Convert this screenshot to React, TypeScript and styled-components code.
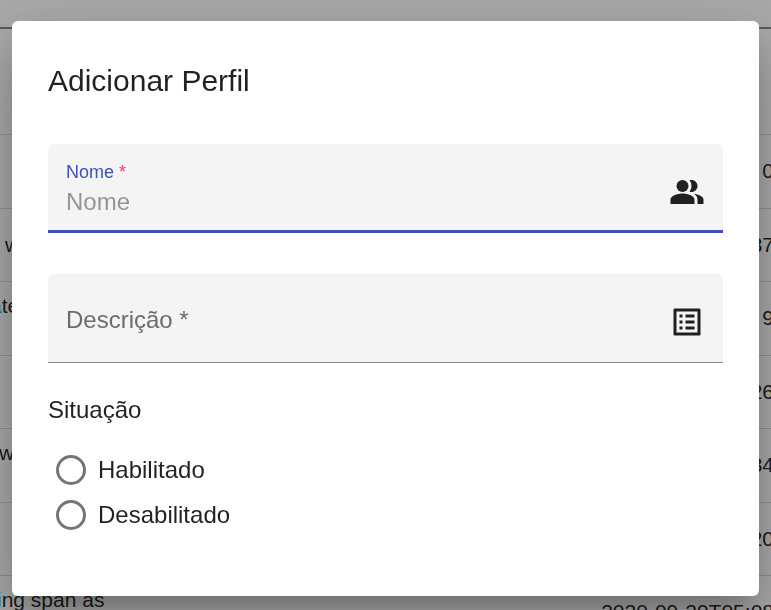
import React from 'react';
import styled, { createGlobalStyle } from 'styled-components';
import { MdListAlt, MdPeopleAlt } from 'react-icons/md';

const GlobalStyle = createGlobalStyle`
  *, *::before, *::after { box-sizing: border-box; }
  html, body { margin: 0; height: 100%; overflow: hidden; background: #fafafa; }
  body { font-family: "Liberation Sans", Arial, sans-serif; color: rgba(0, 0, 0, 0.87); }
`;

const Page = styled.div`
  height: 610px;
  overflow: hidden;
  background: #fafafa;
`;

const Toolbar = styled.div`
  height: 29px;
  border-bottom: 2px solid #858585;
`;

const HeaderRow = styled.div`
  height: 106px;
  border-bottom: 1px solid #d2d2d2;
`;

const Row = styled.div<{ $height: number }>`
  display: flex;
  justify-content: space-between;
  align-items: center;
  height: ${(p) => p.$height}px;
  padding-bottom: ${(p) => (p.$height > 73 ? 2 : 0)}px;
  border-bottom: 1px solid #d2d2d2;
  font-size: 21px;
  line-height: 24px;
  white-space: nowrap;
`;

const DescriptionCell = styled.div<{ $shift: number; $raised?: boolean }>`
  margin-left: ${(p) => p.$shift}px;
  padding-bottom: ${(p) => (p.$raised ? 24 : 0)}px;
`;

const Linked = styled.span`
  color: #42a5d5;
`;

const DateCell = styled.div`
  margin-right: -3px;
`;

const Backdrop = styled.div`
  position: fixed;
  inset: 0;
  display: flex;
  align-items: flex-start;
  justify-content: center;
  padding-top: 21px;
  background: rgba(0, 0, 0, 0.32);
`;

const Dialog = styled.form`
  width: 747px;
  height: 575px;
  padding: 36px;
  border-radius: 6px;
  background: #fff;
  box-shadow:
    0 16.5px 22.5px -10.5px rgba(0, 0, 0, 0.2),
    0 36px 57px 4.5px rgba(0, 0, 0, 0.14),
    0 13.5px 69px 12px rgba(0, 0, 0, 0.12);
`;

const Title = styled.h2`
  margin: 0 0 39px;
  font-size: 30px;
  line-height: 48px;
  font-weight: 400;
`;

const Field = styled.label<{ $focused?: boolean }>`
  display: flex;
  align-items: center;
  justify-content: space-between;
  height: 89px;
  margin-bottom: 41px;
  padding: ${(p) => (p.$focused ? '10px 18px 0' : '7px 18px 0')};
  border-bottom: ${(p) => (p.$focused ? '3px solid #3f51b5' : '1px solid #8c8c8c')};
  border-radius: 6px 6px 0 0;
  background: #f4f4f4;

  svg { flex: none; }
`;

const FieldText = styled.span`
  display: flex;
  flex-direction: column;
`;

const FloatingLabel = styled.span`
  margin-top: -6px;
  font-size: 18px;
  line-height: 26px;
  color: #3f51b5;
`;

const Required = styled.span`
  color: #f9346f;
`;

const Input = styled.input`
  width: 560px;
  height: 34px;
  padding: 0;
  border: 0;
  outline: 0;
  background: transparent;
  font: 24px/27px "Liberation Sans", Arial, sans-serif;

  &::placeholder { color: #959595; opacity: 1; }
`;

const RestingLabel = styled.span`
  margin-top: -4px;
  font-size: 24px;
  line-height: 27px;
  color: #6c6c6c;
`;

const GroupTitle = styled.div`
  margin: -8px 0 24px;
  font-size: 24px;
  line-height: 27px;
`;

const Option = styled.label`
  display: flex;
  align-items: center;
  gap: 12px;
  height: 45px;
  padding-left: 8px;
  font-size: 24px;
`;

const Radio = styled.input.attrs({ type: 'radio', name: 'situacao' })`
  appearance: none;
  width: 30px;
  height: 30px;
  margin: 0;
  border: 3px solid #757575;
  border-radius: 50%;
`;

const rows: { height: number; left?: React.ReactNode; shift?: number; raised?: boolean; date: string }[] = [
  { height: 74, date: '0' },
  { height: 73, left: 'w', shift: 5, date: '37' },
  { height: 74, left: <><Linked>a</Linked>te</>, shift: -10, raised: true, date: '9' },
  { height: 73, date: '26' },
  { height: 74, left: 'w', shift: -1, raised: true, date: '34' },
  { height: 73, date: '20' },
  { height: 74, left: <><Linked>i</Linked>ng span as</>, shift: -3, raised: true, date: '2020-09-29T05:08' },
];

export default function App() {
  return (
    <>
      <GlobalStyle />
      <Page>
        <Toolbar />
        <HeaderRow />
        {rows.map((r, i) => (
          <Row key={i} $height={r.height}>
            <DescriptionCell $shift={r.shift ?? 0} $raised={r.raised}>{r.left}</DescriptionCell>
            <DateCell>{r.date}</DateCell>
          </Row>
        ))}
      </Page>
      <Backdrop>
        <Dialog>
          <Title>Adicionar Perfil</Title>
          <Field $focused>
            <FieldText>
              <FloatingLabel>Nome <Required>*</Required></FloatingLabel>
              <Input placeholder="Nome" />
            </FieldText>
            <MdPeopleAlt size={36} />
          </Field>
          <Field>
            <RestingLabel>Descrição *</RestingLabel>
            <MdListAlt size={36} />
          </Field>
          <GroupTitle>Situação</GroupTitle>
          <Option><Radio />Habilitado</Option>
          <Option><Radio />Desabilitado</Option>
        </Dialog>
      </Backdrop>
    </>
  );
}
